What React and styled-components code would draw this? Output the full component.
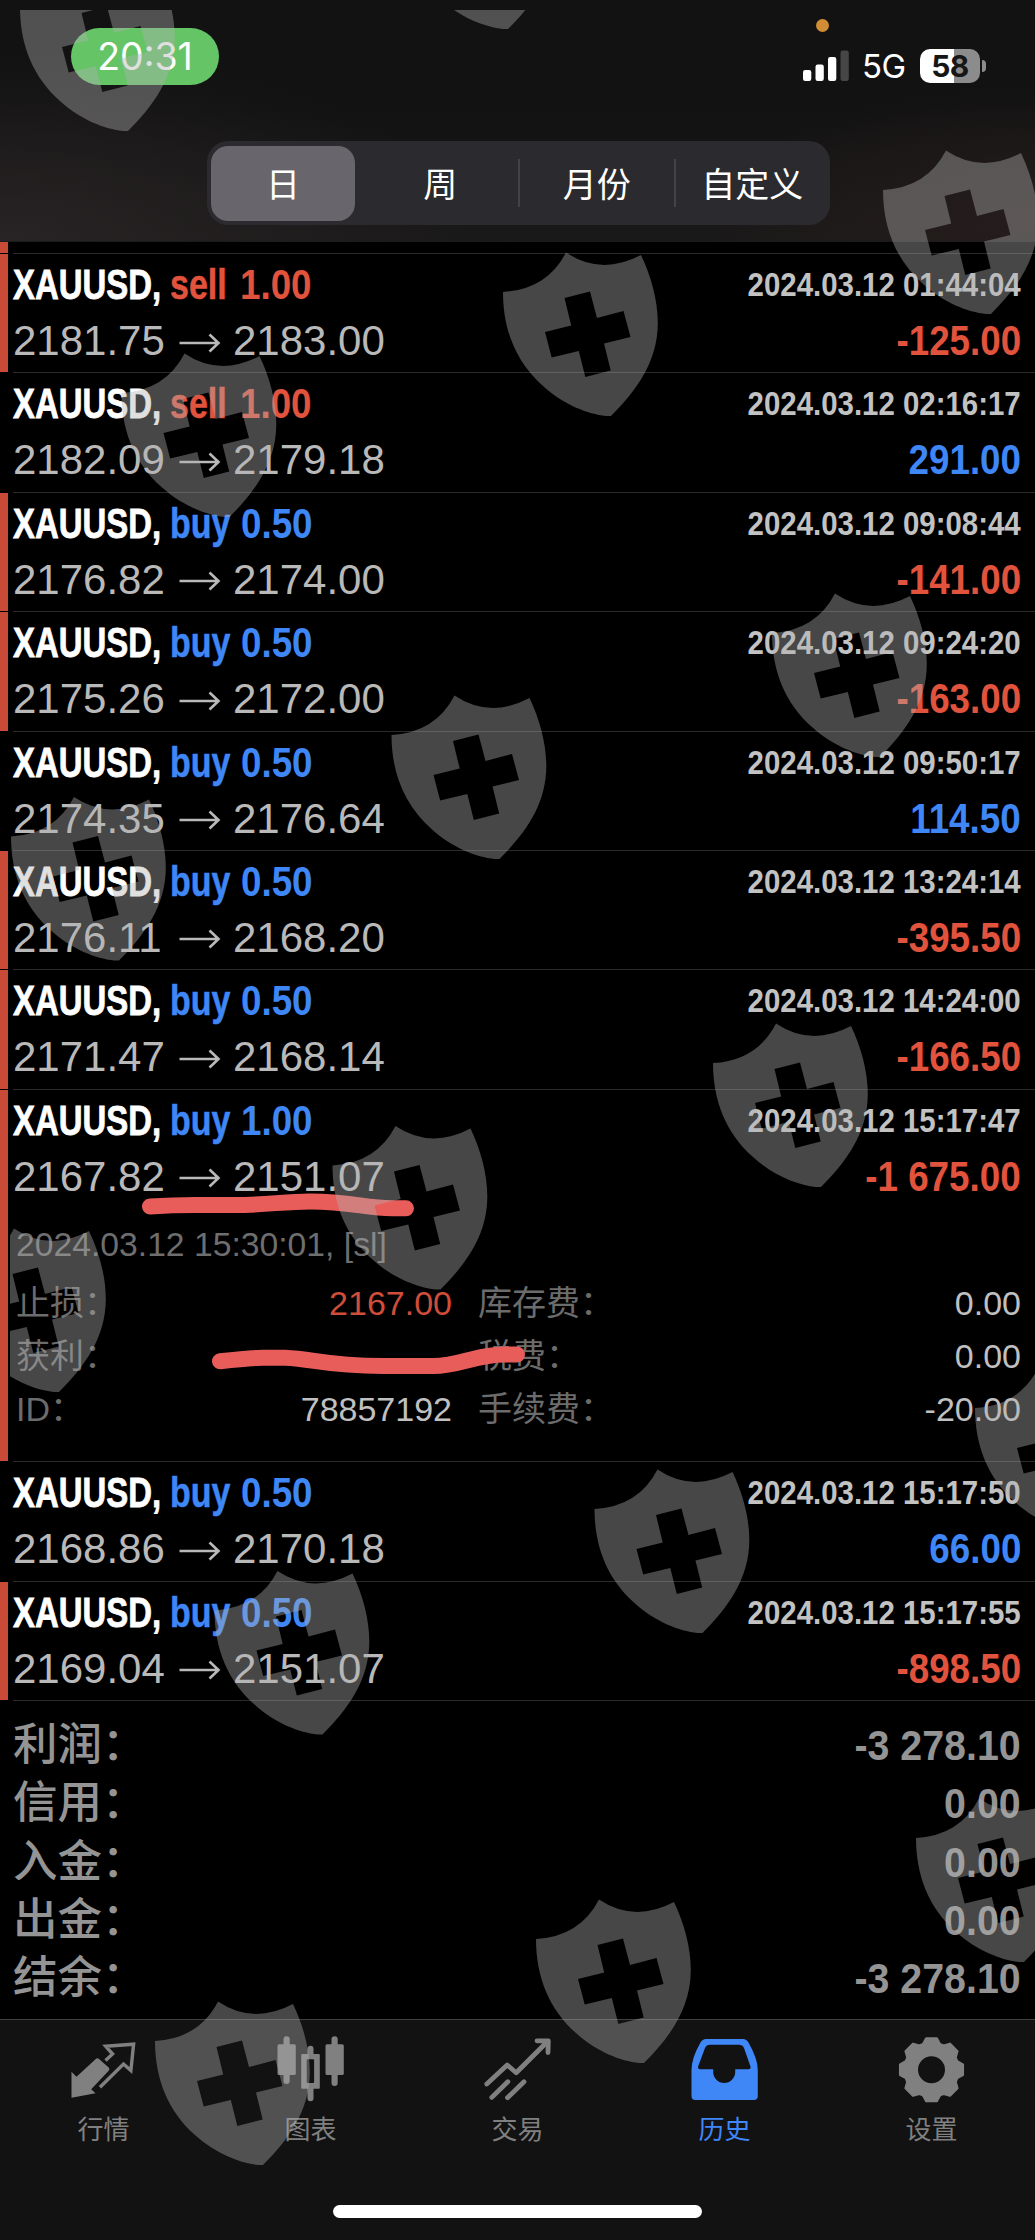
import React, { useState } from "react";
import styled, { createGlobalStyle } from "styled-components";

const RED = "#e2533d";
const BLUE = "#3f86f7";

const periods = ["日", "周", "月份", "自定义"];

const deals = [
  { side: "sell", volume: "1.00", open: "2181.75", close: "2183.00", time: "2024.03.12 01:44:04", profit: "-125.00" },
  { side: "sell", volume: "1.00", open: "2182.09", close: "2179.18", time: "2024.03.12 02:16:17", profit: "291.00" },
  { side: "buy", volume: "0.50", open: "2176.82", close: "2174.00", time: "2024.03.12 09:08:44", profit: "-141.00" },
  { side: "buy", volume: "0.50", open: "2175.26", close: "2172.00", time: "2024.03.12 09:24:20", profit: "-163.00" },
  { side: "buy", volume: "0.50", open: "2174.35", close: "2176.64", time: "2024.03.12 09:50:17", profit: "114.50" },
  { side: "buy", volume: "0.50", open: "2176.11", close: "2168.20", time: "2024.03.12 13:24:14", profit: "-395.50" },
  { side: "buy", volume: "0.50", open: "2171.47", close: "2168.14", time: "2024.03.12 14:24:00", profit: "-166.50" },
  {
    side: "buy",
    volume: "1.00",
    open: "2167.82",
    close: "2151.07",
    time: "2024.03.12 15:17:47",
    profit: "-1 675.00",
    details: {
      comment: "2024.03.12 15:30:01, [sl]",
      rows: [
        ["止损", "2167.00", "库存费", "0.00"],
        ["获利", "", "税费", "0.00"],
        ["ID", "78857192", "手续费", "-20.00"],
      ],
    },
  },
  { side: "buy", volume: "0.50", open: "2168.86", close: "2170.18", time: "2024.03.12 15:17:50", profit: "66.00" },
  { side: "buy", volume: "0.50", open: "2169.04", close: "2151.07", time: "2024.03.12 15:17:55", profit: "-898.50" },
];

const totals = [
  ["利润", "-3 278.10"],
  ["信用", "0.00"],
  ["入金", "0.00"],
  ["出金", "0.00"],
  ["结余", "-3 278.10"],
];

const shields = [
  [-3, -55],
  [377, -157],
  [860, 128],
  [480, 230],
  [98.5, 331],
  [749, 571],
  [368.5, 673],
  [-12, 774.5],
  [690, 1001],
  [309.5, 1103.5],
  [-72, 1206],
  [952, 1346],
  [571.5, 1447],
  [191.5, 1548.5],
  [893, 1776],
  [513, 1877],
  [132, 1979],
];

const isLoss = (deal) => deal.profit.startsWith("-");

const gearPath = () => {
  const points = [];
  for (let i = 0; i < 8; i++) {
    [
      [-18, 27],
      [-9.5, 31.8],
      [9.5, 31.8],
      [18, 27],
    ].forEach(([deg, r]) => {
      const angle = ((i * 45 + deg - 90) * Math.PI) / 180;
      points.push(`${(35.5 + r * Math.cos(angle)).toFixed(2)},${(35.7 + r * Math.sin(angle)).toFixed(2)}`);
    });
  }
  return `M${points.join("L")}Z M50.2 35.7a14.7 14.7 0 1 0-29.4 0a14.7 14.7 0 1 0 29.4 0Z`;
};

const QuotesIcon = () => (
  <TabIcon viewBox="0 0 72 70">
    <path
      d="M3.5 37.7 8.5 42.7 27.5 25.2Q29.2 23.4 31 25L40.7 33.6Q42.2 35.2 40.7 36.8L23.2 55.3 27.5 59.3 3.5 63.7Z"
      fill="currentColor"
    />
    <path
      d="M37.5 26.5 44.6 20 37.7 12.3 65.6 10.2 62.9 36.5 55.5 30 32 53.2"
      fill="none"
      stroke="currentColor"
      strokeWidth="3.4"
    />
  </TabIcon>
);

const ChartIcon = () => (
  <TabIcon viewBox="0 0 72 70">
    <g fill="currentColor">
      <rect x="2.5" y="10.3" width="18.3" height="30.7" rx="1.5" />
      <rect x="8.5" y="2.3" width="6.2" height="47.7" rx="3" />
      <rect x="50.5" y="10.3" width="18.3" height="30.7" rx="1.5" />
      <rect x="56.5" y="2.3" width="6.2" height="49.7" rx="3" />
      <path
        d="M27.2 20h5.3v-5.3a3 3 0 0 1 6 0V20h5.3q1 0 1 1v32.7q0 1-1 1h-5.3v9.5a3 3 0 0 1-6 0v-9.5h-5.3q-1 0-1-1V21q0-1 1-1ZM31.7 26.3v21.7q0 1 1 1h5.4q1 0 1-1V26.3q0-1-1-1h-5.4q-1 0-1 1Z"
        fillRule="evenodd"
      />
    </g>
  </TabIcon>
);

const TradeIcon = () => (
  <TabIcon viewBox="0 0 72 70">
    <g fill="none" stroke="currentColor" strokeWidth="4.8" strokeLinecap="round" strokeLinejoin="round">
      <path d="M4.8 50 25.2 31 34.2 38.8 65 8" />
      <path d="M55 6.8H66.3L66 18.5" />
      <path d="M9.8 63.4 25.8 47.8M25.5 63.7 42 47.8" />
    </g>
  </TabIcon>
);

const HistoryIcon = () => (
  <TabIcon viewBox="0 0 72 70">
    <path
      d="M17 5H54Q57.5 5 59.5 8.5 68.8 25 68.8 36V62Q68.8 66 64.8 66H6.5Q2.5 66 2.5 62V36Q2.5 24 11.5 8.5 13.5 5 17 5ZM21 10.7Q17.5 10.7 16 14L9.2 32.3Q8.4 35.3 11.4 35.3H24.2V38A11 11 0 0 0 46.2 38V35.3H59.2Q62.3 35.3 61.4 32.3L55 14Q53.5 10.7 50 10.7Z"
      fill="currentColor"
      fillRule="evenodd"
    />
  </TabIcon>
);

const SettingsIcon = () => (
  <TabIcon viewBox="0 0 72 70">
    <path
      d={gearPath()}
      fill="currentColor"
      fillRule="evenodd"
      stroke="currentColor"
      strokeWidth="2.4"
      strokeLinejoin="round"
    />
  </TabIcon>
);

const tabs = [
  { name: "行情", Icon: QuotesIcon },
  { name: "图表", Icon: ChartIcon },
  { name: "交易", Icon: TradeIcon },
  { name: "历史", Icon: HistoryIcon },
  { name: "设置", Icon: SettingsIcon },
];

const StatusBar = () => (
  <StatusContainer>
    <TimePill>20:31</TimePill>
    <StatusRight>
      <RecordDot />
      <StatusIcons>
        <Signal viewBox="0 0 47 32">
          <rect x="0" y="20" width="8.3" height="11" rx="2.2" />
          <rect x="12.5" y="14.5" width="8.3" height="16.5" rx="2.2" />
          <rect x="25" y="7" width="8.3" height="24" rx="2.2" />
          <rect x="37.5" y="0.5" width="8.3" height="30.5" rx="2.2" opacity="0.22" />
        </Signal>
        <Network>5G</Network>
        <Battery>58</Battery>
        <BatteryNub />
      </StatusIcons>
    </StatusRight>
  </StatusContainer>
);

const Deal = ({ deal }) => (
  <DealRow>
    <LossMark $visible={isLoss(deal)} />
    <DealBody>
      <DealMain>
        <div>
          <Title>
            <Symbol>XAUUSD,</Symbol>
            <Side $side={deal.side}>{deal.side}</Side>
            <Volume $side={deal.side}>{deal.volume}</Volume>
          </Title>
          <Prices>
            <Price>{deal.open}</Price>
            <Arrow viewBox="0 0 42 30">
              <path d="M0.5 15H39M30.5 6.5 39.5 15 30.5 23.5" />
            </Arrow>
            <Price>{deal.close}</Price>
          </Prices>
        </div>
        <RightSide>
          <Time>{deal.time}</Time>
          <Profit $loss={isLoss(deal)}>{deal.profit}</Profit>
        </RightSide>
      </DealMain>
      {deal.details && (
        <Details>
          <Comment>{deal.details.comment}</Comment>
          {deal.details.rows.map(([label, value, feeLabel, fee]) => (
            <DetailRow key={feeLabel}>
              <DetailLabel>{label}：</DetailLabel>
              <DetailValue $alert={label === "止损"}>{value}</DetailValue>
              <DetailLabel>{feeLabel}：</DetailLabel>
              <DetailValue>{fee}</DetailValue>
            </DetailRow>
          ))}
        </Details>
      )}
    </DealBody>
  </DealRow>
);

const Shield = ({ x, y }) => (
  <path
    transform={`translate(${x} ${y})`}
    fillRule="evenodd"
    d="M23 62Q67 59.5 86 22.5 121 46 161 25C171 46 177.8 70 177.8 93 177.8 132 156 161 131 186L126 186C108 184 84 175 63 156 36 132 23 100 23 62ZM84.5 68 110 61.5 117 88 143.5 81 150.5 107 124 113.6 130.7 140.6 105.3 147 98.8 121 71.7 127.5 65 102 91.2 95.4Z"
  />
);

export default function App() {
  const [period, setPeriod] = useState("日");
  const [tab, setTab] = useState("历史");

  return (
    <Screen>
      <GlobalStyle />
      <Header>
        <StatusBar />
        <Segmented>
          {periods.map((item) => (
            <Segment key={item} $active={item === period} onClick={() => setPeriod(item)}>
              {item}
            </Segment>
          ))}
        </Segmented>
      </Header>
      <PreviousRow />
      {deals.map((deal) => (
        <Deal key={deal.time} deal={deal} />
      ))}
      <Totals>
        {totals.map(([label, value]) => (
          <TotalRow key={label}>
            <TotalLabel>{label}：</TotalLabel>
            <TotalValue>{value}</TotalValue>
          </TotalRow>
        ))}
      </Totals>
      <TabBar>
        {tabs.map(({ name, Icon }) => (
          <Tab key={name} $active={name === tab} onClick={() => setTab(name)}>
            <Icon />
            {name}
          </Tab>
        ))}
      </TabBar>
      <HomeArea>
        <HomeIndicator />
      </HomeArea>
      <Marker viewBox="0 0 1035 2240">
        <path d="M150 1206.5C165 1205.5 180 1205 195 1205H235C265 1205 285 1201.5 310 1201.5 350 1201.5 365 1208 392 1208.3H406" />
        <path d="M220 1361.3C240 1359 250 1358 262 1357.7H285C315 1359 325 1366 383 1366H433C460 1366 475 1354.5 505 1354.5H517" />
      </Marker>
      <Watermark viewBox="10 10 1025 2230">
        {shields.map(([x, y]) => (
          <Shield key={`${x},${y}`} x={x} y={y} />
        ))}
      </Watermark>
    </Screen>
  );
}

const GlobalStyle = createGlobalStyle`
  body {
    margin: 0;
    background: #000;
  }

  * {
    box-sizing: border-box;
  }
`;

const Screen = styled.div`
  position: relative;
  display: flex;
  flex-direction: column;
  width: 1035px;
  height: 2240px;
  overflow: hidden;
  background: #000;
  font-family: "Liberation Sans", "Noto Sans CJK SC", sans-serif;
`;

const Header = styled.div`
  height: 242px;
  flex: none;
  background: radial-gradient(ellipse 480px 190px at 0 100%, #282324, transparent),
    radial-gradient(ellipse 330px 130px at 100% 90%, #261d1c, transparent),
    linear-gradient(#121212 45%, #1a1919);
  border-bottom: 1px solid #1c1c1c;
`;

const StatusContainer = styled.div`
  display: flex;
  justify-content: space-between;
  height: 141px;
  padding: 19px 49px 0 71px;
`;

const TimePill = styled.div`
  width: 148px;
  height: 57px;
  margin-top: 9px;
  display: flex;
  align-items: center;
  justify-content: center;
  border-radius: 29px;
  background: #65c466;
  color: #fff;
  font-family: Inter, sans-serif;
  font-size: 37.5px;
  font-weight: 400;
`;

const StatusRight = styled.div`
  width: 184px;
`;

const RecordDot = styled.div`
  width: 13px;
  height: 13px;
  margin-left: 14px;
  border-radius: 50%;
  background: #d18d35;
`;

const StatusIcons = styled.div`
  display: flex;
  align-items: center;
  height: 34px;
  margin: 17px 0 0 1px;
`;

const Signal = styled.svg`
  width: 47px;
  height: 32px;
  flex: none;
  fill: #fff;
`;

const Network = styled.span`
  width: 58px;
  margin-left: 12px;
  margin-right: 1px;
  color: #fff;
  font-family: Inter, sans-serif;
  font-size: 33px;
  font-weight: 400;
  line-height: 36px;
  letter-spacing: -0.5px;
`;

const Battery = styled.div`
  width: 60px;
  height: 34px;
  flex: none;
  border-radius: 10px;
  background: linear-gradient(90deg, #fff 57%, #8c8c8c 57%);
  color: #161616;
  font-family: Inter, sans-serif;
  font-size: 30px;
  font-weight: 700;
  line-height: 34px;
  text-align: center;
  letter-spacing: -0.5px;
`;

const BatteryNub = styled.div`
  width: 4px;
  height: 12px;
  flex: none;
  margin-left: 2px;
  border-radius: 0 4px 4px 0;
  background: #8c8c8c;
`;

const Segmented = styled.div`
  display: flex;
  align-items: center;
  width: 623px;
  height: 84px;
  margin-left: 207px;
  padding-left: 4px;
  border-radius: 21px;
  background: #2b2a2e;
`;

const Segment = styled.button`
  height: ${(p) => (p.$active ? "75px" : "48px")};
  width: ${(p) => (p.$active ? "144px" : "155.5px")};
  ${(p) => p.$active && "margin-right: 7.5px;"}
  padding: 0;
  border: 0;
  border-radius: ${(p) => (p.$active ? "17px" : "0")};
  background: ${(p) => (p.$active ? "#68666c" : "transparent")};
  color: #fff;
  font-family: "Noto Sans CJK SC", sans-serif;
  font-size: 34px;
  font-weight: 400;
  line-height: 46px;
  white-space: nowrap;

  & + &:nth-child(n + 3) {
    border-left: 2px solid #434246;
  }
`;

const PreviousRow = styled.div`
  width: 8px;
  height: 11px;
  flex: none;
  background: #c94a37;
`;

const DealRow = styled.div`
  display: flex;
  flex: none;
`;

const LossMark = styled.div`
  width: 8px;
  margin-top: 1px;
  background: ${(p) => (p.$visible ? "#c94a37" : "transparent")};
`;

const DealBody = styled.div`
  flex: 1;
  margin-left: 5px;
  border-top: 1px solid #2b2b2b;
`;

const DealMain = styled.div`
  display: flex;
  justify-content: space-between;
  height: 118.4px;
  padding: 7px 14px 0 0;
`;

const Title = styled.div`
  display: flex;
  height: 48px;
  line-height: 48px;
  font-size: 42.5px;
  font-weight: 700;
  white-space: nowrap;

  > span {
    transform-origin: left;
  }
`;

const Symbol = styled.span`
  width: 157px;
  color: #fff;
  transform: scaleX(0.775);
  -webkit-text-stroke: 0.8px currentColor;
`;

const Side = styled.span`
  width: ${(p) => (p.$side === "buy" ? "71px" : "70px")};
  color: ${(p) => (p.$side === "buy" ? BLUE : RED)};
  transform: scaleX(0.8);
  -webkit-text-stroke: 0.5px currentColor;
`;

const Volume = styled.span`
  color: ${(p) => (p.$side === "buy" ? BLUE : RED)};
  transform: scaleX(0.865);
`;

const Prices = styled.div`
  display: flex;
  align-items: center;
  height: 48px;
  margin-top: 8px;
  color: #b9b9b9;
`;

const Price = styled.span`
  width: 153px;
  font-size: 42px;
  line-height: 48px;
`;

const Arrow = styled.svg`
  width: 42px;
  height: 30px;
  margin: 3px 12px 0 13px;
  fill: none;
  stroke: currentColor;
  stroke-width: 2.6px;
`;

const RightSide = styled.div`
  display: flex;
  flex-direction: column;
  align-items: flex-end;
  font-weight: 700;
  white-space: nowrap;

  > span {
    transform: scaleX(0.865);
    transform-origin: right;
  }
`;

const Time = styled.span`
  height: 48px;
  font-size: 34px;
  line-height: 46px;
  color: #c2c2c2;
`;

const Profit = styled.span`
  margin-top: 8px;
  font-size: 42.5px;
  line-height: 48px;
  color: ${(p) => (p.$loss ? RED : BLUE)};
`;

const Details = styled.div`
  height: 253px;
  padding: 12px 14px 0 3px;
`;

const Comment = styled.div`
  height: 57px;
  font-size: 33.7px;
  line-height: 48px;
  color: #6e6e6e;
`;

const DetailRow = styled.div`
  display: grid;
  grid-template-columns: 130px 306px 146px 1fr;
  height: 53px;
  font-size: 34px;
  line-height: 53px;
`;

const DetailLabel = styled.span`
  color: #6c6c6c;
  white-space: nowrap;

  &:nth-child(3) {
    padding-left: 26px;
  }
`;

const DetailValue = styled.span`
  text-align: right;
  color: ${(p) => (p.$alert ? "#cf4d39" : "#c0c0c0")};
`;

const Totals = styled.div`
  height: 319px;
  flex: none;
  margin-left: 13px;
  padding: 15px 14px 0 0;
  border-top: 1px solid #2b2b2b;
`;

const TotalRow = styled.div`
  display: flex;
  justify-content: space-between;
  height: 58.4px;
  line-height: 58px;
  color: #949494;
`;

const TotalLabel = styled.span`
  font-size: 44.5px;
  font-weight: 500;
`;

const TotalValue = styled.span`
  font-size: 43px;
  font-weight: 700;
  transform: scaleX(0.915);
  transform-origin: right;
`;

const TabBar = styled.div`
  display: flex;
  height: 150px;
  flex: none;
  padding-top: 14px;
  border-top: 1px solid #404040;
  background: #121212;
`;

const Tab = styled.button`
  flex: 1;
  display: flex;
  flex-direction: column;
  align-items: center;
  padding: 0;
  border: 0;
  background: none;
  color: ${(p) => (p.$active ? BLUE : "#808080")};
  font-family: "Noto Sans CJK SC", sans-serif;
  font-size: 26px;
  line-height: 36px;
`;

const TabIcon = styled.svg`
  width: 72px;
  height: 70px;
  margin-bottom: 6px;
`;

const HomeArea = styled.div`
  flex: 1;
  padding-top: 36px;
  background: #121212;
`;

const HomeIndicator = styled.div`
  width: 369px;
  height: 13px;
  margin: 0 auto;
  border-radius: 7px;
  background: #fff;
`;

const Marker = styled.svg`
  position: absolute;
  inset: 0;
  width: 1035px;
  height: 2240px;
  pointer-events: none;
  fill: none;
  stroke: #e85d59;
  stroke-width: 16px;
  stroke-linecap: round;
`;

const Watermark = styled.svg`
  position: absolute;
  left: 10px;
  top: 10px;
  width: 1025px;
  height: 2230px;
  pointer-events: none;
  fill: rgba(178, 178, 178, 0.4);
`;
